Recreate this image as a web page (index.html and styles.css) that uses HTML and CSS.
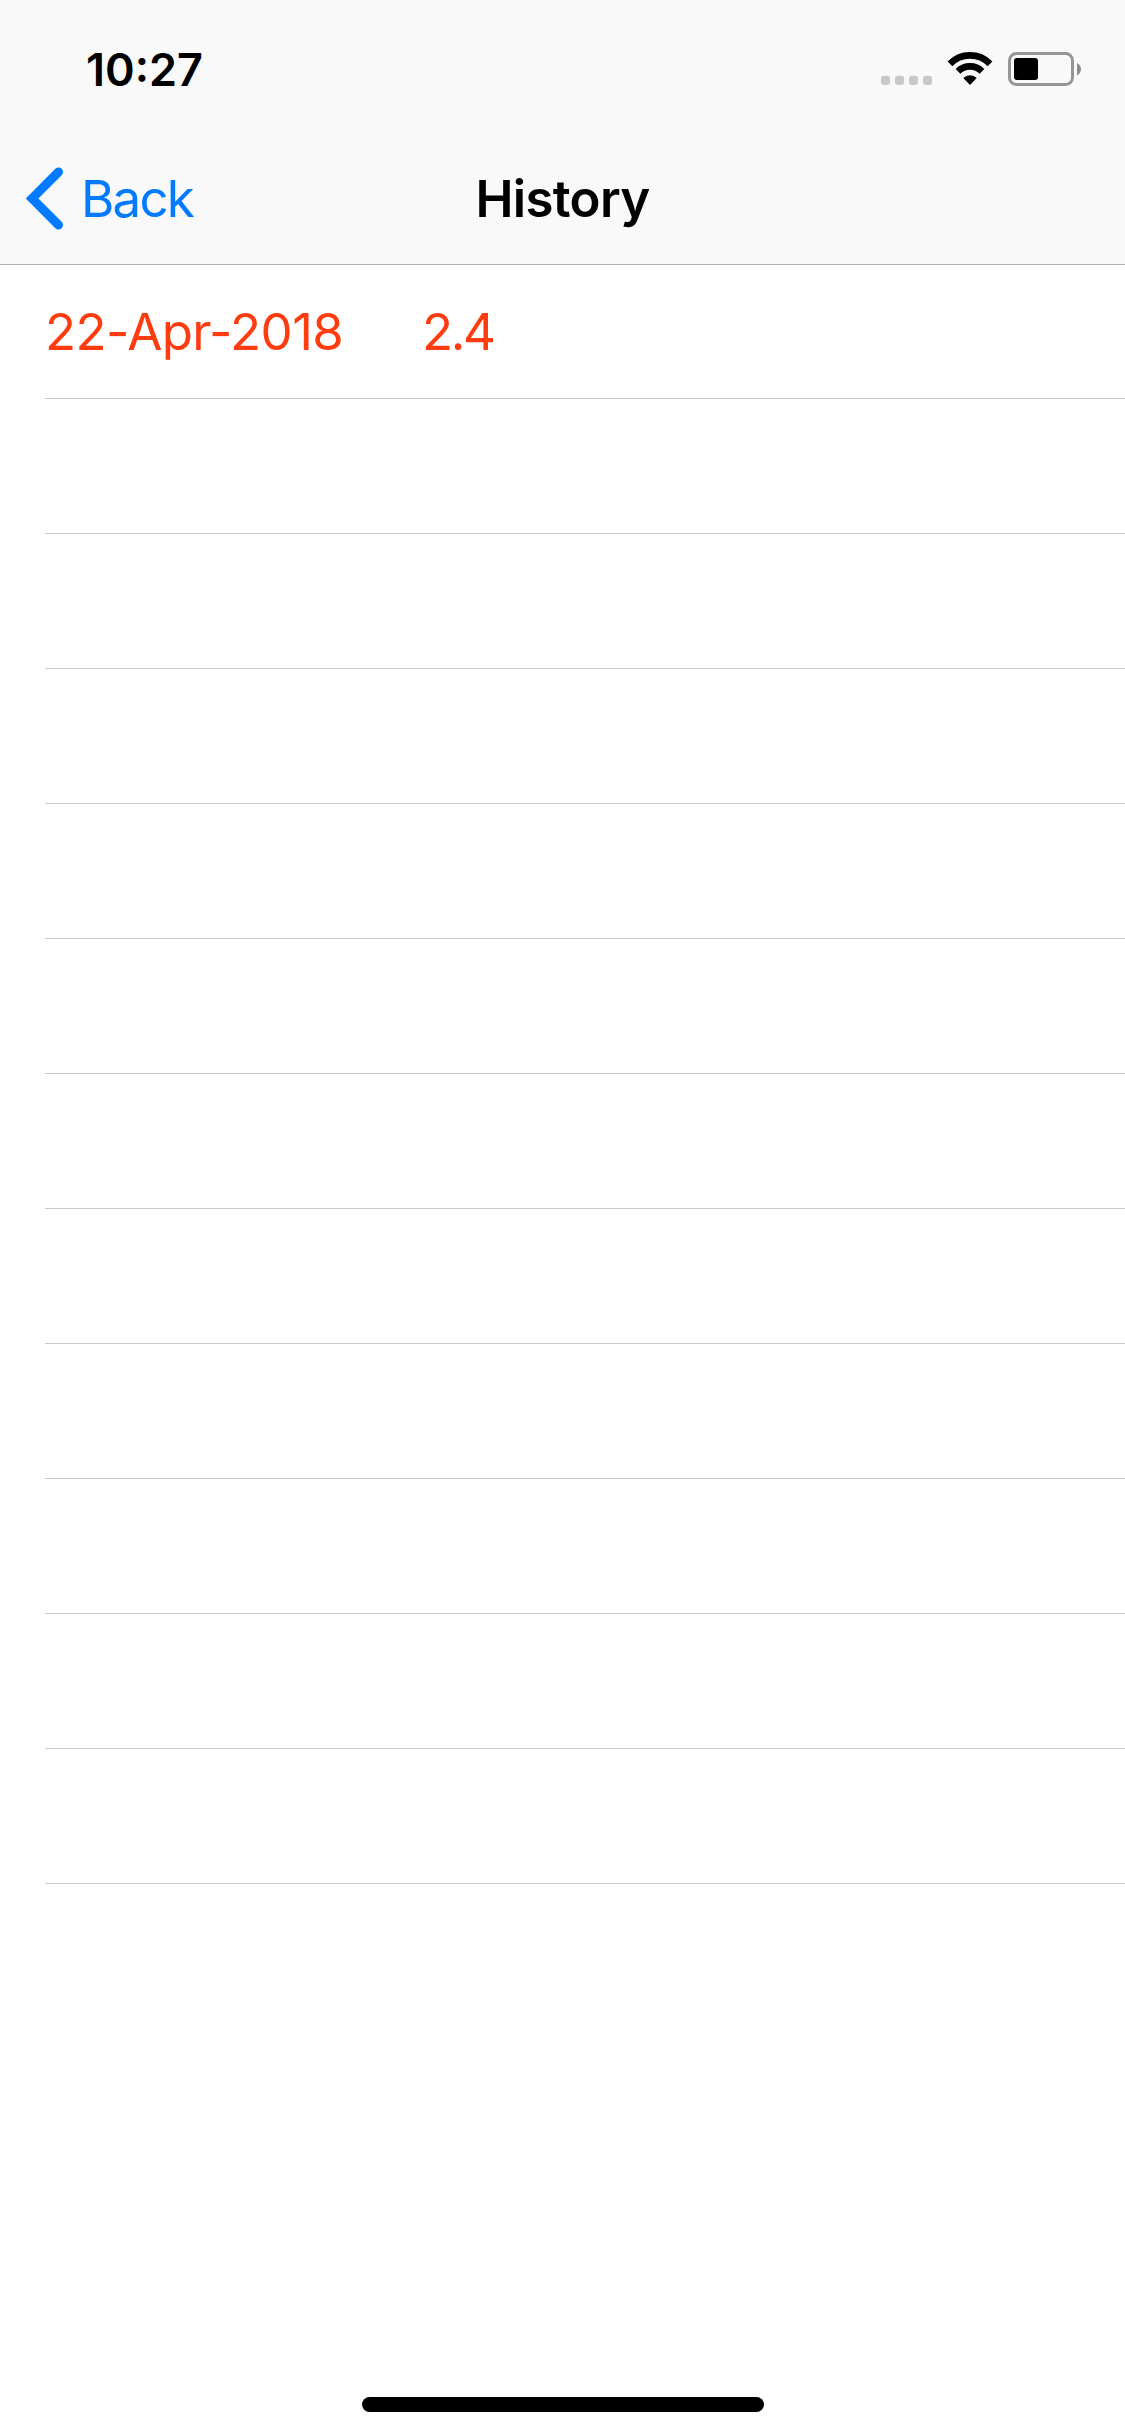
FILE: index.html
```
<!DOCTYPE html>
<html lang="en">
<head>
    <meta charset="UTF-8">
    <meta name="viewport" content="width=device-width, initial-scale=1.0">
    <title>History</title>
    <link rel="stylesheet" href="styles.css">
</head>
<body>
    <header class="header">
        <div class="status-bar">
            <span class="time">10:27</span>
            <!-- signal dots, wifi, battery -->
            <svg class="status-icons" width="202" height="36" viewBox="0 0 202 36">
                <g fill="#c8c8c8">
                    <rect x="1" y="24.7" width="9" height="9.3" rx="3"/>
                    <rect x="15" y="24.7" width="9" height="9.3" rx="3"/>
                    <rect x="29" y="24.7" width="9" height="9.3" rx="3"/>
                    <rect x="43" y="24.7" width="9" height="9.3" rx="3"/>
                </g>
                <path d="M70 12.8 A28 28 0 0 1 110 12.8" fill="none" stroke="#000" stroke-width="6.8"/>
                <path d="M78 20.3 A17 17 0 0 1 102 20.3" fill="none" stroke="#000" stroke-width="6.8"/>
                <path d="M90 34 L83.3 27 A9.5 9.5 0 0 1 96.7 27 Z"/>
                <rect x="129.5" y="2.5" width="63" height="31" rx="7" fill="none" stroke="#959595" stroke-width="3"/>
                <rect x="134" y="7" width="24" height="22" rx="3"/>
                <path d="M197 12 C202.3 14.5 202.3 22 197 24.5 Z" fill="#8c8c8c"/>
            </svg>
        </div>
        <nav class="nav-bar">
            <a class="back" href="#">
                <svg class="chevron" width="38" height="66" viewBox="0 0 38 66">
                    <path d="M32.5 6 L6 32.5 L32.5 59" fill="none" stroke="#007aff" stroke-width="9" stroke-linecap="round"/>
                </svg>
                <span class="back-label">Back</span>
            </a>
            <h1 class="title">History</h1>
        </nav>
    </header>

    <ul class="history-list">
        <li class="row"><span class="date">22-Apr-2018</span><span class="value">2.4</span></li>
        <li class="row"></li>
        <li class="row"></li>
        <li class="row"></li>
        <li class="row"></li>
        <li class="row"></li>
        <li class="row"></li>
        <li class="row"></li>
        <li class="row"></li>
        <li class="row"></li>
        <li class="row"></li>
        <li class="row"></li>
    </ul>

    <div class="home-indicator"></div>
</body>
</html>
```

FILE: styles.css
```
* {
    box-sizing: border-box;
}
body {
    display: flex;
    flex-direction: column;
    height: 2436px;
    margin: 0;
    background-color: #fff;
    font-family: Inter, "Liberation Sans", sans-serif;
    font-size: 51px;
}
.header {
    height: 264px;
    background-color: #f9f9f9;
    box-shadow: 0 1px 0 #b2b2b2;
}
.status-bar {
    display: flex;
    justify-content: space-between;
    height: 132px;
    padding: 0 43px 0 86px;
}
.time {
    margin-top: 42px;
    font-size: 45px;
    font-weight: 600;
    line-height: 55px;
}
.status-icons {
    margin-top: 51px;
}
.nav-bar {
    display: grid;
    grid-template-columns: 1fr auto 1fr;
    align-items: center;
    height: 132px;
}
.back {
    display: flex;
    align-items: center;
    padding-left: 26px;
    color: #007aff;
    text-decoration: none;
}
.chevron {
    margin-top: 2px;
}
.back-label {
    margin-left: 17px;
    letter-spacing: -1.8px;
}
.title {
    margin: 0;
    font-size: 51px;
    font-weight: 600;
    letter-spacing: -0.7px;
}
.history-list {
    margin: 0;
    padding: 0 0 0 45px;
    list-style: none;
}
.row {
    display: flex;
    align-items: center;
    height: 135px;
    border-bottom: 1px solid #c8c7cc;
    color: #ff3b10;
}
.date {
    width: 377px;
    letter-spacing: -0.6px;
}
.value {
    letter-spacing: -2.4px;
}
.home-indicator {
    width: 402px;
    height: 15px;
    margin: auto auto 24px;
    border-radius: 8px;
    background-color: #000;
}
```
